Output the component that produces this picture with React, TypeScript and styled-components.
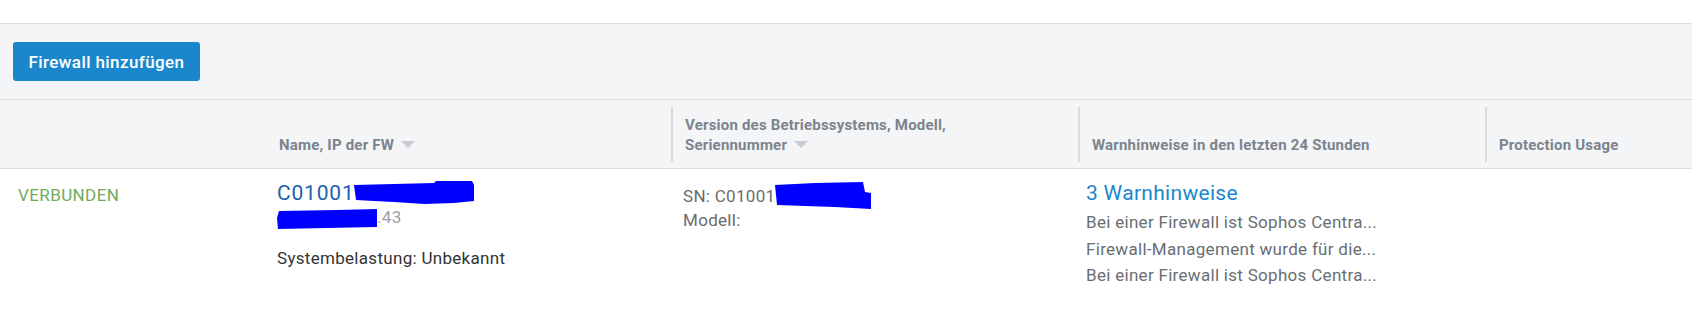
import React, { FC } from 'react';
import styled, { createGlobalStyle } from 'styled-components';

const GlobalStyle = createGlobalStyle`
  html, body {
    margin: 0;
    padding: 0;
    background: #ffffff;
  }
  body {
    font-family: Roboto, 'Noto Sans', 'Liberation Sans', sans-serif;
    color: #333333;
  }
`;

const colors = {
  border: '#dcdde0',
  panel: '#f4f5f7',
  header: '#7b848d',
  blue: '#1a87cd',
  link: '#1c5fae',
  green: '#6faa5d',
  grey: '#686e74',
  redact: '#0000ff',
};

const TopStrip = styled.div`
  height: 23px;
  border-bottom: 1px solid ${colors.border};
`;

const Toolbar = styled.div`
  display: flex;
  align-items: center;
  height: 75px;
  padding-left: 13px;
  background: ${colors.panel};
  border-bottom: 1px solid ${colors.border};
`;

const PrimaryButton = styled.button`
  height: 39px;
  width: 187px;
  padding: 0;
  border: none;
  border-radius: 3px;
  background: ${colors.blue};
  color: #ffffff;
  font-family: inherit;
  font-size: 17px;
  font-weight: 500;
  letter-spacing: 0.4px;
  cursor: pointer;
`;

const Grid = styled.div`
  display: grid;
  grid-template-columns: 265px 406px 407px 407px 1fr;
`;

const HeaderRow = styled(Grid)`
  height: 68px;
  background: ${colors.panel};
  border-bottom: 1px solid ${colors.border};
`;

const HeaderCell = styled.div<{ $divider?: boolean }>`
  display: flex;
  flex-direction: column;
  justify-content: flex-end;
  margin: 7px 0 6px;
  padding: 0 12px 7px;
  border-left: 2px solid ${(p) => (p.$divider ? '#d9dadd' : 'transparent')};
  color: ${colors.header};
  font-size: 15px;
  font-weight: 700;
  line-height: 20px;
  letter-spacing: 0.2px;
  white-space: nowrap;
`;

const SortArrow = styled.span`
  display: inline-block;
  width: 0;
  height: 0;
  margin-left: 7px;
  vertical-align: 2px;
  border-left: 7px solid transparent;
  border-right: 7px solid transparent;
  border-top: 7px solid #c9ccd0;
`;

const BodyRow = styled(Grid)`
  padding-top: 11px;
  padding-bottom: 14px;
`;

const Cell = styled.div<{ $pad?: number; $top?: number }>`
  padding-left: ${(p) => p.$pad ?? 12}px;
  padding-top: ${(p) => p.$top ?? 0}px;
  font-size: 17px;
  letter-spacing: 0.3px;
`;

const Status = styled.div`
  color: ${colors.green};
  line-height: 26px;
  padding-left: 6px;
  padding-top: 2px;
  letter-spacing: 0.4px;
`;

const Title = styled.div<{ $tone: 'dark' | 'light' }>`
  font-size: 21px;
  line-height: 26px;
  letter-spacing: ${(p) => (p.$tone === 'dark' ? 0.8 : 0.3)}px;
  color: ${(p) => (p.$tone === 'dark' ? colors.link : colors.blue)};
  white-space: nowrap;
`;

const Line = styled.div<{ $muted?: boolean; $gap?: number }>`
  line-height: 22px;
  margin-top: ${(p) => p.$gap ?? 0}px;
  color: ${(p) => (p.$muted ? '#6b6b6b' : '#333333')};
  white-space: nowrap;
`;

const Faint = styled.span`
  color: #9aa0a6;
`;

const AlertLine = styled.div`
  line-height: 26.5px;
  color: ${colors.grey};
  white-space: nowrap;
`;

const AlertList = styled.div`
  margin-top: 3px;
`;

const Scribble = styled.svg`
  display: inline-block;
  vertical-align: middle;
`;

const RedactName: FC = () => (
  <Scribble width="120" height="24" viewBox="0 0 120 24" style={{ marginTop: -3 }}>
    <path
      d="M0 4 L40 3 L80 2 L82 0 L118 0 L120 4 L120 20 L100 22 L70 23 L40 21 L20 20 L2 19 Z"
      fill={colors.redact}
    />
  </Scribble>
);

const RedactIp: FC = () => (
  <Scribble width="100" height="21" viewBox="0 0 100 21">
    <path d="M2 3 L60 2 L100 1 L100 19 L50 20 L1 21 L0 10 Z" fill={colors.redact} />
  </Scribble>
);

const RedactSn: FC = () => (
  <Scribble width="100" height="27" viewBox="0 0 100 27" style={{ marginTop: -4 }}>
    <path
      d="M0 3 L40 1 L88 0 L90 10 L96 11 L96 27 L60 25 L30 24 L2 23 Z"
      fill={colors.redact}
    />
  </Scribble>
);

const alerts = [
  'Bei einer Firewall ist Sophos Centra...',
  'Firewall-Management wurde für die...',
  'Bei einer Firewall ist Sophos Centra...',
];

export default function App() {
  return (
    <>
      <GlobalStyle />
      <TopStrip />
      <Toolbar>
        <PrimaryButton>Firewall hinzufügen</PrimaryButton>
      </Toolbar>
      <HeaderRow>
        <HeaderCell />
        <HeaderCell>
          <div>
            Name, IP der FW
            <SortArrow />
          </div>
        </HeaderCell>
        <HeaderCell $divider>
          <div>Version des Betriebssystems, Modell,</div>
          <div>
            Seriennummer
            <SortArrow />
          </div>
        </HeaderCell>
        <HeaderCell $divider>Warnhinweise in den letzten 24 Stunden</HeaderCell>
        <HeaderCell $divider>Protection Usage</HeaderCell>
      </HeaderRow>
      <BodyRow>
        <Cell $pad={12}>
          <Status>VERBUNDEN</Status>
        </Cell>
        <Cell>
          <Title $tone="dark">
            C01001
            <RedactName />
          </Title>
          <Line>
            <RedactIp />
            <Faint>.43</Faint>
          </Line>
          <Line $gap={18}>Systembelastung: Unbekannt</Line>
        </Cell>
        <Cell $top={5}>
          <Line $muted>
            SN: C01001
            <RedactSn />
          </Line>
          <Line $muted>Modell:</Line>
        </Cell>
        <Cell $pad={8}>
          <Title $tone="light">3 Warnhinweise</Title>
          <AlertList>
            {alerts.map((a, i) => (
              <AlertLine key={i}>{a}</AlertLine>
            ))}
          </AlertList>
        </Cell>
        <Cell />
      </BodyRow>
    </>
  );
}
